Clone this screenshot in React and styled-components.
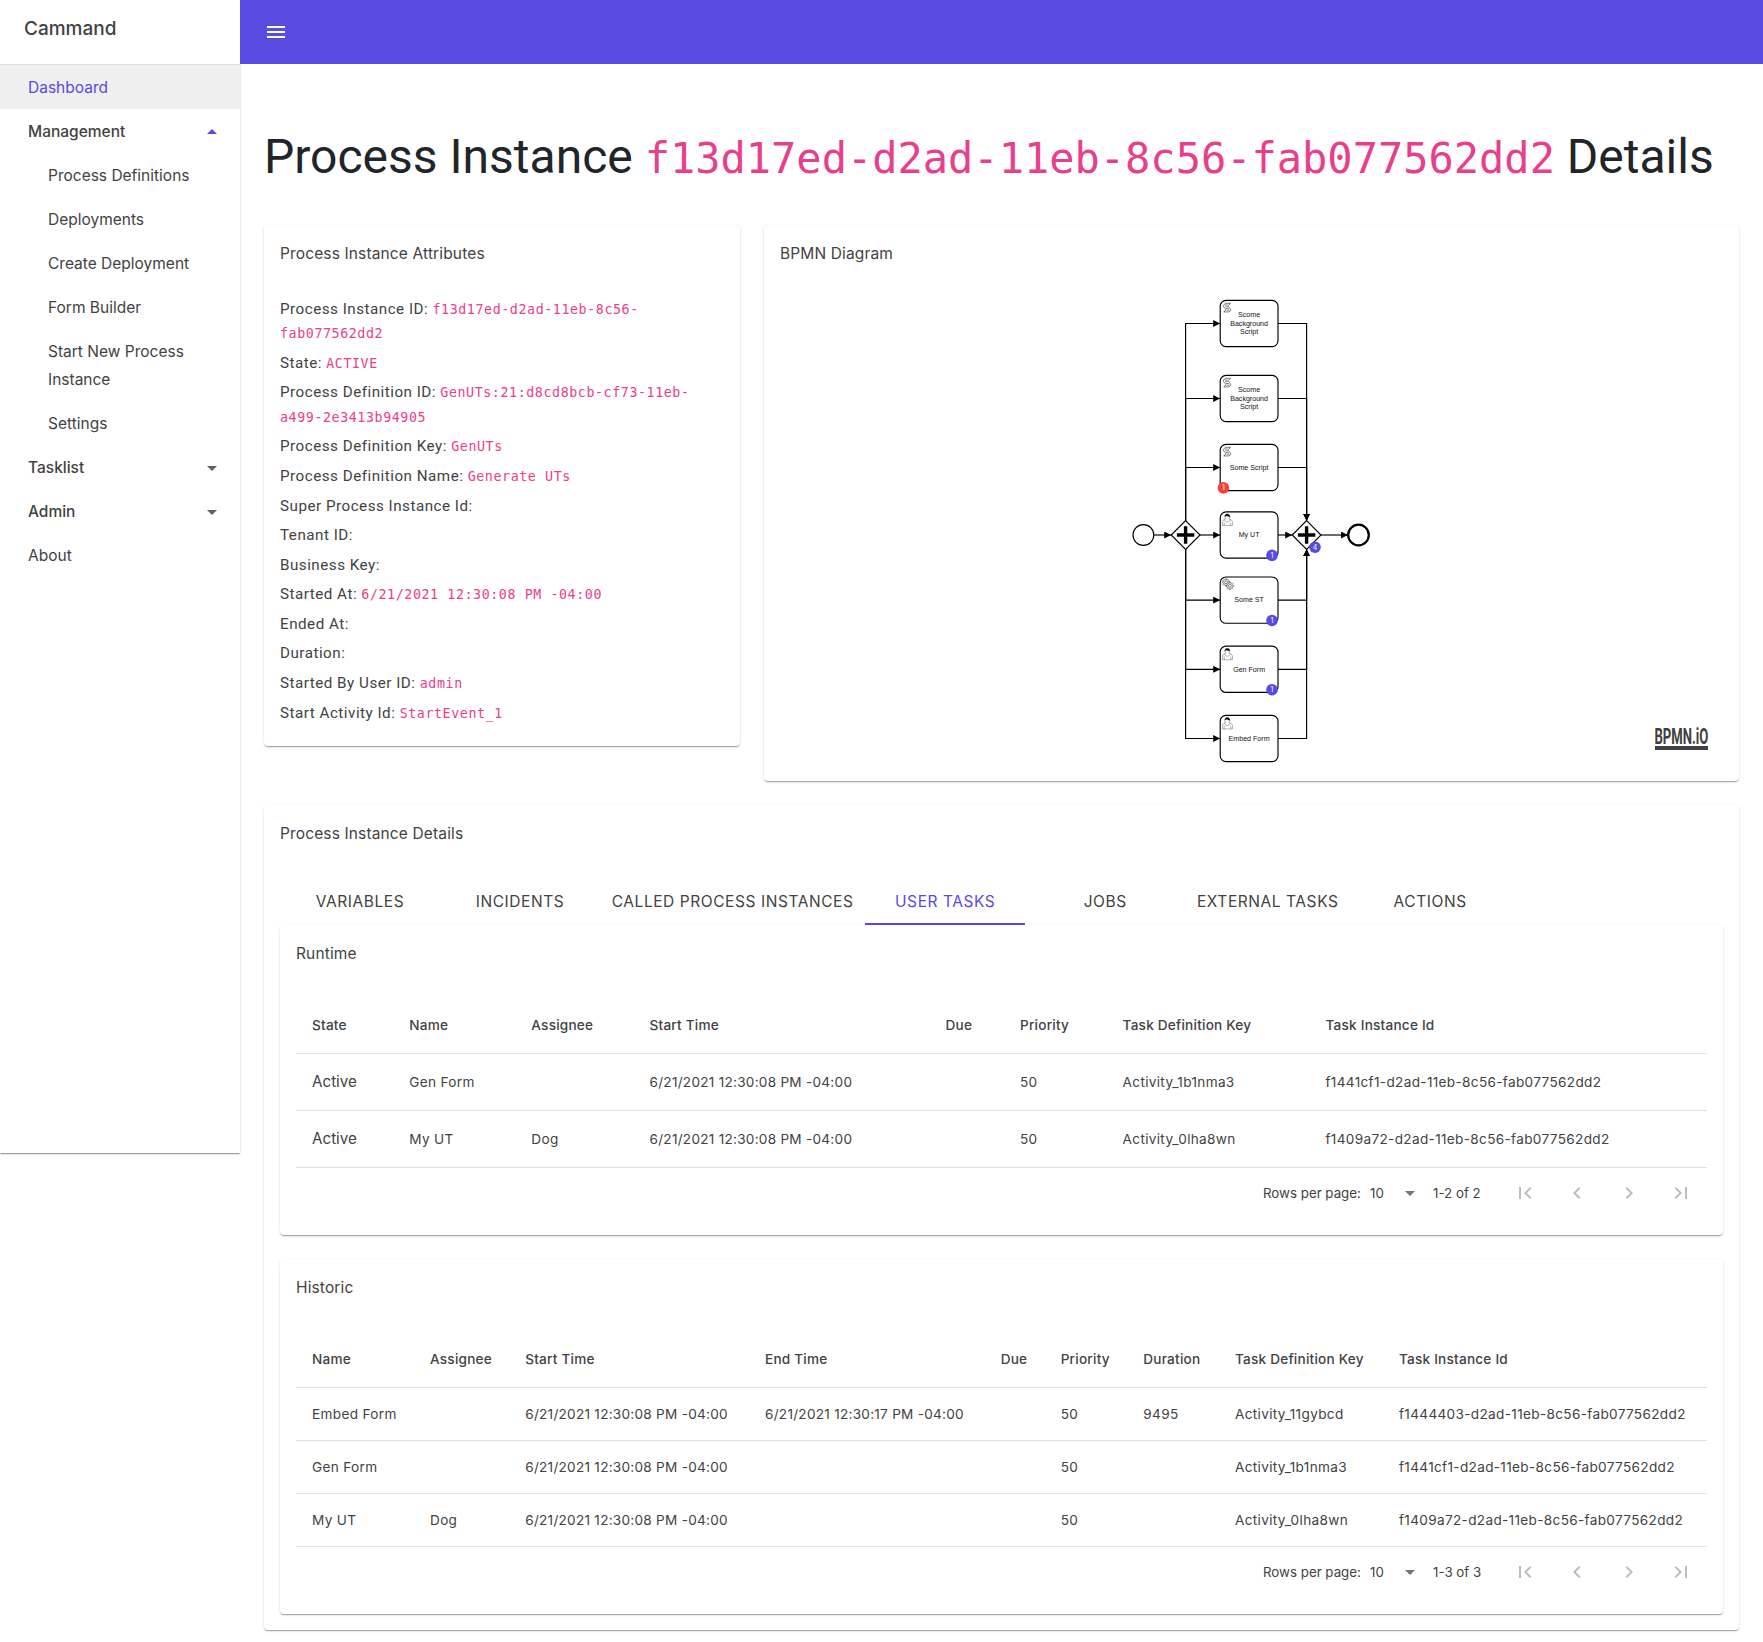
import React from "react";
import styled, { createGlobalStyle, css } from "styled-components";

const sans = `Inter, "Liberation Sans", sans-serif`;
const roboto = `Roboto, "Liberation Sans", sans-serif`;
const mono = `"DejaVu Sans Mono", "Liberation Mono", monospace`;
const primary = "#594ae2";
const ink = "#424242";

const GlobalStyle = createGlobalStyle`
  *, *::before, *::after { box-sizing: border-box; }
  body { margin: 0; background: #fff; color: ${ink}; font-family: ${roboto}; }
`;

const Shell = styled.div`
  display: flex;
  align-items: flex-start;
  width: 1763px;
  height: 1642px;
  overflow: hidden;
`;

const elevation = css`
  box-shadow: 0 2px 1px -1px rgba(0, 0, 0, 0.2), 0 1px 1px 0 rgba(0, 0, 0, 0.14),
    0 1px 3px 0 rgba(0, 0, 0, 0.12);
`;

const Sidebar = styled.aside`
  flex: 0 0 240px;
  height: 1153px;
  background: #fff;
  font-family: ${sans};
  ${elevation}
`;

const Brand = styled.div`
  height: 65px;
  padding: 13px 24px;
  border-bottom: 1px solid #e0e0e0;
  font-size: 19px;
  line-height: 32px;
  font-weight: 500;
`;

const NavItem = styled.a`
  display: flex;
  align-items: center;
  justify-content: space-between;
  padding: 9px 16px 7px ${(p) => (p.$nested ? 48 : 28)}px;
  font-size: 15.5px;
  line-height: 28px;
  font-weight: ${(p) => (p.$group ? 500 : 400)};
  color: ${(p) => (p.$active ? primary : ink)};
  background: ${(p) => (p.$active ? "#efefef" : "transparent")};
`;

const Main = styled.div`
  flex: 1;
  min-width: 0;
`;

const AppBar = styled.header`
  height: 64px;
  padding-left: 24px;
  display: flex;
  align-items: center;
  background: ${primary};
`;

const Icon = styled.svg`
  display: block;
  width: 24px;
  height: 24px;
  fill: ${(p) => p.$color};
`;

const Content = styled.main`
  padding: 64px 24px 0;
`;

const PageTitle = styled.h1`
  margin: 0 0 39px;
  font: 400 48px/58px ${roboto};
  height: 58px;
  white-space: nowrap;
  color: #212529;
`;

const Code = styled.code`
  font-family: ${mono};
  font-size: 87.5%;
  line-height: 1;
  color: #e83e8c;
`;

const TopRow = styled.div`
  display: grid;
  grid-template-columns: 476px 975px;
  align-items: start;
  gap: 24px;
  margin-bottom: 24px;
`;

const Card = styled.section`
  padding: 0 16px 16px;
  border-radius: 4px;
  background: #fff;
  ${elevation}
`;

const CardStack = styled.div`
  display: flex;
  flex-direction: column;
  gap: 24px;
`;

const CardTitle = styled.h2`
  margin: 0;
  height: 72px;
  padding-top: 17px;
  font: 400 15.5px/24px ${sans};
  letter-spacing: 0.14px;
`;

const Attribute = styled.div`
  margin-bottom: 5.28px;
  font-size: 15.2px;
  line-height: 24.32px;
  letter-spacing: 0.5px;

  ${Code} { letter-spacing: 0.59px; }
`;

const Canvas = styled.svg`
  display: block;
  width: 943px;
  height: 468px;
`;

const Tabs = styled.nav`
  display: flex;
  height: 48px;
`;

const Tab = styled.button`
  min-width: 160px;
  padding: 2px 11.7px 0;
  border: 0;
  border-bottom: 2px solid ${(p) => (p.$active ? primary : "transparent")};
  border-top: 2px solid transparent;
  background: none;
  font: 400 15.5px/28px ${sans};
  letter-spacing: 0.57px;
  color: ${(p) => (p.$active ? primary : ink)};
  text-transform: uppercase;
  white-space: nowrap;
`;

const Table = styled.table`
  width: 100%;
  table-layout: fixed;
  border-collapse: separate;
  border-spacing: 0;
  font: 400 13.6px/20px ${sans};
`;

const Col = styled.col`
  width: ${(p) => (p.$w ? `${p.$w}px` : "auto")};
`;

const Th = styled.th`
  height: 57px;
  padding: 0 0 0 16px;
  border-bottom: 1px solid #e0e0e0;
  text-align: left;
  font-weight: 500;
  letter-spacing: 0.22px;
  white-space: nowrap;
`;

const Td = styled.td`
  height: ${(p) => p.$height}px;
  padding: 0 0 0 16px;
  border-bottom: 1px solid #e0e0e0;
  letter-spacing: ${(p) => (p.$date ? 0.26 : 0.33)}px;
  white-space: nowrap;
  ${(p) => p.$large && css`font-size: 15.2px; letter-spacing: 0;`}
`;

const Pager = styled.footer`
  display: flex;
  align-items: center;
  justify-content: flex-end;
  height: 51px;
  padding-bottom: 1px;
  font: 400 13.3px/20px ${sans};
`;

const PagerLabel = styled.span`
  width: 107px;
`;

const PageSize = styled.span`
  display: flex;
  align-items: center;
  justify-content: space-between;
  width: 52px;
`;

const PagerRange = styled.span`
  width: 77px;
  padding-left: 11px;
  white-space: nowrap;
`;

const PagerButton = styled.button`
  display: flex;
  justify-content: center;
  width: 52px;
  padding: 0;
  border: 0;
  background: none;
`;

const glyphs = {
  menu: "M3 18h18v-2H3v2zm0-5h18v-2H3v2zm0-7v2h18V6H3z",
  down: "M7 10l5 5 5-5z",
  up: "M7 14l5-5 5 5z",
  first: "M18.41 16.59L13.82 12l4.59-4.59L17 6l-6 6 6 6zM6 6h2v12H6z",
  prev: "M15.41 7.41L14 6l-6 6 6 6 1.41-1.41L10.83 12z",
  next: "M10 6L8.59 7.41 13.17 12l-4.58 4.59L10 18l6-6z",
  last: "M5.59 7.41L10.18 12l-4.59 4.59L7 18l6-6-6-6zM16 6h2v12h-2z",
};

const Glyph = ({ name, color = "#757575" }) => (
  <Icon viewBox="0 0 24 24" $color={color}>
    <path d={glyphs[name]} />
  </Icon>
);

const nav = [
  { label: "Dashboard", active: true },
  { label: "Management", group: true, open: true },
  { label: "Process Definitions", nested: true },
  { label: "Deployments", nested: true },
  { label: "Create Deployment", nested: true },
  { label: "Form Builder", nested: true },
  { label: "Start New Process Instance", nested: true },
  { label: "Settings", nested: true },
  { label: "Tasklist", group: true },
  { label: "Admin", group: true },
  { label: "About" },
];

const attributes = [
  ["Process Instance ID", "f13d17ed-d2ad-11eb-8c56-fab077562dd2"],
  ["State", "ACTIVE"],
  ["Process Definition ID", "GenUTs:21:d8cd8bcb-cf73-11eb-a499-2e3413b94905"],
  ["Process Definition Key", "GenUTs"],
  ["Process Definition Name", "Generate UTs"],
  ["Super Process Instance Id"],
  ["Tenant ID"],
  ["Business Key"],
  ["Started At", "6/21/2021 12:30:08 PM -04:00"],
  ["Ended At"],
  ["Duration"],
  ["Started By User ID", "admin"],
  ["Start Activity Id", "StartEvent_1"],
];

const tabs = ["Variables", "Incidents", "Called Process Instances", "User Tasks", "Jobs", "External Tasks", "Actions"];

const runtime = {
  title: "Runtime",
  rowHeight: 57,
  largeFirst: true,
  range: "1-2 of 2",
  columns: [["State", 97.3], ["Name", 122], ["Assignee", 118.2], ["Start Time", 296], ["Due", 74.5], ["Priority", 102.6], ["Task Definition Key", 202.9], ["Task Instance Id"]],
  rows: [
    ["Active", "Gen Form", "", "6/21/2021 12:30:08 PM -04:00", "", "50", "Activity_1b1nma3", "f1441cf1-d2ad-11eb-8c56-fab077562dd2"],
    ["Active", "My UT", "Dog", "6/21/2021 12:30:08 PM -04:00", "", "50", "Activity_0lha8wn", "f1409a72-d2ad-11eb-8c56-fab077562dd2"],
  ],
};

const historic = {
  title: "Historic",
  rowHeight: 53,
  range: "1-3 of 3",
  columns: [["Name", 118], ["Assignee", 95.2], ["Start Time", 239.8], ["End Time", 235.7], ["Due", 60], ["Priority", 82.6], ["Duration", 91.7], ["Task Definition Key", 164], ["Task Instance Id"]],
  rows: [
    ["Embed Form", "", "6/21/2021 12:30:08 PM -04:00", "6/21/2021 12:30:17 PM -04:00", "", "50", "9495", "Activity_11gybcd", "f1444403-d2ad-11eb-8c56-fab077562dd2"],
    ["Gen Form", "", "6/21/2021 12:30:08 PM -04:00", "", "", "50", "", "Activity_1b1nma3", "f1441cf1-d2ad-11eb-8c56-fab077562dd2"],
    ["My UT", "Dog", "6/21/2021 12:30:08 PM -04:00", "", "", "50", "", "Activity_0lha8wn", "f1409a72-d2ad-11eb-8c56-fab077562dd2"],
  ],
};

function TaskTable({ data }) {
  return (
    <Card>
      <CardTitle>{data.title}</CardTitle>
      <Table>
        <colgroup>
          {data.columns.map(([name, w]) => <Col key={name} $w={w} />)}
        </colgroup>
        <thead>
          <tr>{data.columns.map(([name]) => <Th key={name}>{name}</Th>)}</tr>
        </thead>
        <tbody>
          {data.rows.map((row, r) => (
            <tr key={r}>
              {row.map((cell, c) => (
                <Td key={c} $height={data.rowHeight} $large={data.largeFirst && c === 0} $date={cell.includes("/")}>
                  {cell}
                </Td>
              ))}
            </tr>
          ))}
        </tbody>
      </Table>
      <Pager>
        <PagerLabel>Rows per page:</PagerLabel>
        <PageSize>10 <Glyph name="down" /></PageSize>
        <PagerRange>{data.range}</PagerRange>
        {["first", "prev", "next", "last"].map((name) => (
          <PagerButton key={name} aria-label={name}><Glyph name={name} color="#bdbdbd" /></PagerButton>
        ))}
      </Pager>
    </Card>
  );
}

/* Diagram geometry: task marks are drawn in BPMN units and scaled to the fitted zoom. */
const ZOOM = 0.58;
const TASK = { x: 440.2, w: 57.8, h: 46.3 };
const SPLIT = 405.6;
const JOIN = 526.6;
const MID = 238;

const tasks = [
  { y: 26.5, kind: "script", lines: ["Scome", "Background", "Script"] },
  { y: 101.5, kind: "script", lines: ["Scome", "Background", "Script"] },
  { y: 170.5, kind: "script", lines: ["Some Script"], error: 1 },
  { y: MID, kind: "user", lines: ["My UT"], count: 1 },
  { y: 303.1, kind: "service", lines: ["Some ST"], count: 1 },
  { y: 372.3, kind: "user", lines: ["Gen Form"], count: 1 },
  { y: 441.5, kind: "user", lines: ["Embed Form"] },
];

function gearPath(cx, cy, outer, inner, teeth) {
  const pts = [];
  const step = (Math.PI * 2) / teeth;
  for (let i = 0; i < teeth; i++) {
    [[-0.3, inner], [-0.2, outer], [0.2, outer], [0.3, inner]].forEach(([o, r]) => {
      const a = (i + o) * step;
      pts.push(`${(cx + r * Math.cos(a)).toFixed(2)},${(cy + r * Math.sin(a)).toFixed(2)}`);
    });
  }
  return `M${pts.join("L")}Z`;
}

function Mark({ kind }) {
  if (kind === "script")
    return (
      <path
        d="m15,20c9.967,-6.273 -8.001,-7.919 2.969,-14.938l-8.803,0c-10.970,7.019 6.997,8.665 -2.969,14.938zm-7,-12l5,0m-4.500,3l4.500,0m-3,3l5,0m-4,3l5,0"
        fill="none"
        stroke="#222"
        strokeWidth="1"
      />
    );
  if (kind === "service")
    return (
      <g fill="#fff" stroke="#222" strokeWidth="0.900">
        <path d={gearPath(10, 9.3, 6.4, 4.7, 8)} />
        <circle cx="10" cy="9.300" r="2.500" />
        <path d={gearPath(16.7, 15.3, 6.4, 4.7, 8)} />
        <circle cx="16.700" cy="15.300" r="2.500" />
      </g>
    );
  return (
    <g transform="translate(15 12)" fill="#fff" stroke="#222" strokeWidth="0.600">
      <path d="m0,0c0.909,-0.845 1.594,-2.049 1.594,-3.385 0,-2.554 -1.805,-4.622 -4.357,-4.622 -2.552,0 -4.288,2.068 -4.288,4.622 0,1.348 0.974,2.562 1.896,3.405 -0.529,0.187 -5.669,2.097 -5.794,4.756v6.718h17v-6.718c0,-2.298 -5.528,-4.595 -6.051,-4.776zm-8,6l0,5.500m11,0l0,-5" />
      <path d="m2.162,1.009c0,2.447 -2.158,4.431 -4.821,4.431 -2.665,0 -4.822,-1.981 -4.822,-4.431" fill="none" />
      <path d="m-6.900,-3.800c0,0 2.251,-2.358 4.274,-1.177 2.024,1.181 4.221,1.537 4.124,0.965 -0.098,-0.570 -0.117,-3.791 -4.191,-4.136 -3.572,0.001 -4.208,3.367 -4.207,4.348z" fill="#000" stroke="#000" />
    </g>
  );
}

const Badge = ({ x, y, value, color = primary }) => (
  <g>
    <circle cx={x} cy={y} r="5.8" fill={color} />
    <text x={x} y={y + 2.5} fontSize="7" fill="#fff" textAnchor="middle" fontFamily={sans}>{value}</text>
  </g>
);

const Gateway = ({ x }) => (
  <g>
    <path d={`M${x} ${MID - 14.4}l14.4 14.4l-14.4 14.4l-14.4 -14.4z`} fill="#fff" stroke="#000" strokeWidth="1.150" />
    <path d={`M${x - 8.7} ${MID}h17.400M${x} ${MID - 8.7}v17.400`} stroke="#000" strokeWidth="3.400" />
  </g>
);

function Diagram() {
  const right = TASK.x + TASK.w;
  return (
    <Canvas viewBox="0 0 943 468">
      <defs>
        <marker id="arrow" viewBox="0 0 6 6" refX="6" refY="3" markerWidth="7" markerHeight="7" markerUnits="userSpaceOnUse" orient="auto">
          <path d="M0 0L6 3L0 6Z" />
        </marker>
      </defs>
      <g fill="none" stroke="#000" strokeWidth="1.150">
        {tasks.map((t, i) => t.y !== MID && (
          <g key={i}>
            <path d={`M${SPLIT} ${MID}V${t.y}H${TASK.x}`} markerEnd="url(#arrow)" />
            <path d={`M${right} ${t.y}H${JOIN}V${t.y < MID ? MID - 14.4 : MID + 14.4}`} markerEnd="url(#arrow)" />
          </g>
        ))}
        <path d={`M374 ${MID}H${SPLIT - 14.4}`} markerEnd="url(#arrow)" />
        <path d={`M${SPLIT + 14.4} ${MID}H${TASK.x}`} markerEnd="url(#arrow)" />
        <path d={`M${right} ${MID}H${JOIN - 14.4}`} markerEnd="url(#arrow)" />
        <path d={`M${JOIN + 14.4} ${MID}H568`} markerEnd="url(#arrow)" />
      </g>
      <circle cx="363.400" cy={MID} r="10.400" fill="#fff" stroke="#000" strokeWidth="1.150" />
      <circle cx="578.500" cy={MID} r="10.300" fill="#fff" stroke="#000" strokeWidth="2.300" />
      <Gateway x={SPLIT} />
      <Gateway x={JOIN} />
      {tasks.map((t, i) => {
        const top = t.y - TASK.h / 2;
        return (
          <g key={i}>
            <rect x={TASK.x} y={top} width={TASK.w} height={TASK.h} rx="5.800" fill="#fff" stroke="#000" strokeWidth="1.150" />
            <g transform={`translate(${TASK.x} ${top}) scale(${ZOOM})`}><Mark kind={t.kind} /></g>
            {t.lines.map((line, n) => (
              <text
                key={n}
                x={TASK.x + TASK.w / 2}
                y={t.y + 2.2 + (n - (t.lines.length - 1) / 2) * 8.4}
                fontFamily={`"Liberation Sans", Arial, sans-serif`}
                fontSize="7.100"
                textAnchor="middle"
                fill="#111"
              >
                {line}
              </text>
            ))}
            {t.count && <Badge x={492} y={t.y + 20.4} value={t.count} />}
            {t.error && <Badge x={443.4} y={t.y + 20.4} value={t.error} color="#f44336" />}
          </g>
        );
      })}
      <Badge x={535} y={MID + 12.2} value={4} />
      <g fill="#404040">
        <text transform="translate(874.500 447.300) scale(0.610 1)" fontFamily={roboto} fontWeight="700" fontSize="21.500">BPMN.iO</text>
        <rect x="875" y="449" width="53" height="4" />
      </g>
    </Canvas>
  );
}

export default function App() {
  return (
    <>
      <GlobalStyle />
      <Shell>
        <Sidebar>
          <Brand>Cammand</Brand>
          {nav.map((item) => (
            <NavItem key={item.label} $active={item.active} $nested={item.nested} $group={item.group}>
              {item.label}
              {item.group && <Glyph name={item.open ? "up" : "down"} color={item.open ? primary : "#616161"} />}
            </NavItem>
          ))}
        </Sidebar>
        <Main>
          <AppBar><Glyph name="menu" color="#fff" /></AppBar>
          <Content>
            <PageTitle>
              Process Instance <Code>f13d17ed-d2ad-11eb-8c56-fab077562dd2</Code> Details
            </PageTitle>
            <TopRow>
              <Card>
                <CardTitle>Process Instance Attributes</CardTitle>
                {attributes.map(([label, value]) => (
                  <Attribute key={label}>
                    {label}: {value && <Code>{value}</Code>}
                  </Attribute>
                ))}
              </Card>
              <Card>
                <CardTitle>BPMN Diagram</CardTitle>
                <Diagram />
              </Card>
            </TopRow>
            <Card>
              <CardTitle>Process Instance Details</CardTitle>
              <Tabs>
                {tabs.map((t) => <Tab key={t} $active={t === "User Tasks"}>{t}</Tab>)}
              </Tabs>
              <CardStack>
                <TaskTable data={runtime} />
                <TaskTable data={historic} />
              </CardStack>
            </Card>
          </Content>
        </Main>
      </Shell>
    </>
  );
}
